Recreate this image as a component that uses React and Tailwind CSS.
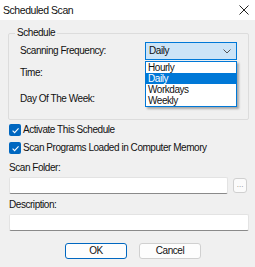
import React from "react";

function Check() {
  return (
    <span className="flex h-[12px] w-[12px] shrink-0 items-center justify-center rounded-[2px] bg-[#0067c0]">
      <svg width="9" height="9" viewBox="0 0 10 10">
        <path d="M1.8 5.2 L4 7.4 L8.4 2.6" fill="none" stroke="white" strokeWidth="1.2" />
      </svg>
    </span>
  );
}

export default function App() {
  return (
    <div className="relative h-[267px] w-[255px] overflow-hidden whitespace-nowrap bg-[#f0f0f0] text-[10px] leading-none tracking-[-0.45px] text-[#111]" style={{ fontFamily: '"Liberation Sans", Arial, sans-serif' }}>
      <div className="flex h-[20px] items-center justify-between bg-white pl-[3px] pr-[6px]">
        <span className="text-[10.5px]">Scheduled Scan</span>
        <svg width="10" height="10" viewBox="0 0 10 10">
          <path d="M0.5 0.5 L9.5 9.5 M9.5 0.5 L0.5 9.5" stroke="#222" strokeWidth="1" />
        </svg>
      </div>
      <div className="px-[8px] pt-[7px]">
        <fieldset className="h-[93px] w-[241px] rounded-[2px] border border-[#dcdcdc]">
          <legend className="ml-[6px] px-[2px] leading-[12px]">Schedule</legend>
          <div className="flex flex-col pl-[11px]">
            <div className="mt-[3px] flex h-[18px] items-center">
              <span className="w-[125px]">Scanning Frequency:</span>
              <div className="flex h-[18px] w-[92px] items-center justify-between border border-[#0078d7] bg-[#cce4f7] pl-[3px] pr-[5px]">
                <span>Daily</span>
                <svg width="8" height="5" viewBox="0 0 8 5">
                  <path d="M0.5 0.5 L4 4 L7.5 0.5" fill="none" stroke="#555" strokeWidth="1" />
                </svg>
              </div>
            </div>
            <div className="mt-[4px] flex h-[18px] items-center">
              <span>Time:</span>
            </div>
            <div className="mt-[8px] flex h-[18px] items-center">
              <span>Day Of The Week:</span>
            </div>
          </div>
        </fieldset>
        <div className="mt-[4px] flex flex-col gap-[6px] pl-[1px]">
          <label className="flex h-[12px] items-center gap-[2px]">
            <Check />
            <span>Activate This Schedule</span>
          </label>
          <label className="flex h-[12px] items-center gap-[2px]">
            <Check />
            <span>Scan Programs Loaded in Computer Memory</span>
          </label>
        </div>
        <div className="mt-[9px] pl-[1px]">Scan Folder:</div>
        <div className="mt-[4px] flex items-center gap-[5px] pl-[1px]">
          <div className="h-[17px] w-[221px] rounded-[2px] border border-[#e3e3e3] border-b-[#8a8a8a] bg-white" />
          <div className="flex h-[15px] w-[14px] items-end justify-center rounded-[3px] border border-[#d0d0d0] bg-[#fbfbfb] pb-[3px] text-[8px] tracking-normal text-[#888]">...</div>
        </div>
        <div className="mt-[6px] pl-[1px]">Description:</div>
        <div className="mt-[4px] pl-[1px]">
          <div className="h-[17px] w-[240px] rounded-[2px] border border-[#e3e3e3] border-b-[#8a8a8a] bg-white" />
        </div>
        <div className="mt-[12px] flex gap-[12px] pl-[57px]">
          <div className="flex h-[16px] w-[62px] items-center justify-center rounded-[3px] border border-[#0067c0] bg-[#fdfdfd]">OK</div>
          <div className="flex h-[16px] w-[62px] items-center justify-center rounded-[3px] border border-[#d0d0d0] bg-[#fdfdfd]">Cancel</div>
        </div>
      </div>
      <div className="absolute left-[145px] top-[61px] w-[92px] border border-[#0078d7] bg-white shadow-[2px_2px_2px_rgba(0,0,0,0.3)]">
        <div className="flex h-[11px] items-center pl-[2px]">Hourly</div>
        <div className="flex h-[11px] items-center bg-[#0078d7] pl-[2px] text-white">Daily</div>
        <div className="flex h-[11px] items-center pl-[2px]">Workdays</div>
        <div className="flex h-[11px] items-center pl-[2px]">Weekly</div>
      </div>
    </div>
  );
}
